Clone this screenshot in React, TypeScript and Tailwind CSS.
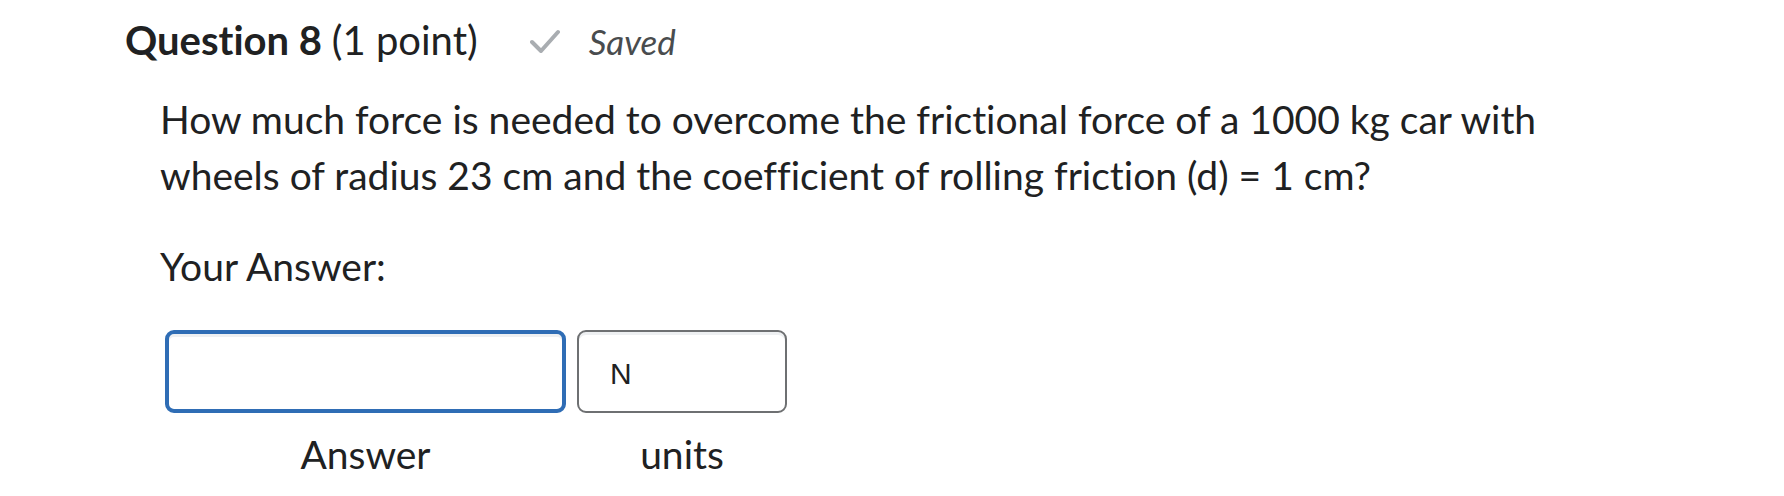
import React from "react";

export default function App() {
  return (
    <div className="min-h-[496px] w-[1784px] bg-white text-[#202122] font-['Lato',sans-serif] [font-variant-ligatures:none]">
      <div className="pl-[125px] pt-[16px]">
        <div className="flex items-baseline leading-[1.2]">
          <h2 className="text-[40px] leading-[1.2] font-bold">
            Question 8 <span className="font-normal">(1 point)</span>
          </h2>
          <svg
            className="ml-[52px] self-center mt-[2px]"
            width="30"
            height="24"
            viewBox="0 0 30 24"
            fill="none"
          >
            <path
              d="M2 13 L11 22 L28 3"
              stroke="#a9adb1"
              strokeWidth="4"
              strokeLinecap="round"
              strokeLinejoin="round"
            />
          </svg>
          <span className="ml-[29px] text-[35px] italic text-[#494c4e]">Saved</span>
        </div>
      </div>
      <div className="pl-[160px]">
        <p className="mt-[27px] text-[39px] leading-[56px]">
          How much force is needed to overcome the frictional force of a 1000 kg car with
          <br />
          wheels of radius 23 cm and the coefficient of rolling friction (d) = 1 cm?
        </p>
        <p className="mt-[35px] text-[39px] leading-[56px]">Your Answer:</p>
        <div className="mt-[36px] ml-[5px] flex gap-[11px]">
          <div className="flex flex-col">
            <div className="h-[83px] w-[401px] rounded-[9px] border-[4px] border-[#2f6db5] bg-white shadow-[inset_0_3px_0_0_#eef0f2]" />
            <div className="mt-[13px] text-center text-[39px] leading-[56px]">Answer</div>
          </div>
          <div className="flex flex-col">
            <div className="flex h-[83px] w-[210px] items-center rounded-[9px] border-[2px] border-[#6e7072] bg-white pl-[31px] shadow-[inset_0_3px_0_0_#eef0f2]">
              <span className="font-['Liberation_Sans',Arial,sans-serif] text-[30px] text-[#202122] mt-[3px]">N</span>
            </div>
            <div className="mt-[13px] text-center text-[39px] leading-[56px]">units</div>
          </div>
        </div>
      </div>
    </div>
  );
}
